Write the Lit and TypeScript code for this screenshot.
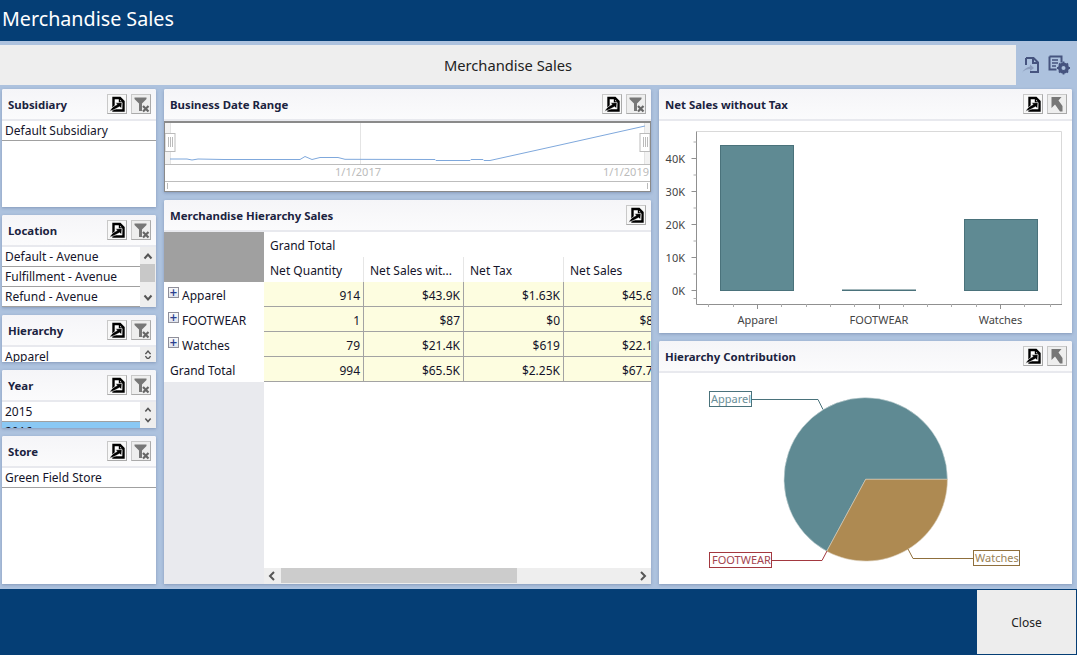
import { LitElement, html, css, svg } from "lit";
import { customElement } from "lit/decorators.js";

const exportIcon = svg`<path d="M6.500 4h6.500l3.500 3.500V16.500H6.500z" fill="#fff" stroke="#000" stroke-width="2.400"/><path d="M12.500 3.500v4.500h4.500" fill="none" stroke="#000" stroke-width="1.400"/><path d="M2.500 17.500C4.500 13.500 7.500 11.500 10 10.500L8.500 8.800 15 8.500 14.500 14.500 12.500 12.800C9.500 14.500 6.500 16 2.500 17.500z" fill="#000" stroke="#fff" stroke-width=".6"/>`;
const filterIcon = svg`<path d="M3.500 3.500h12v1.500l-4.500 4.500V17h-3V9.500L3.500 5z" fill="#777"/><path d="M12 12l5.500 5.500m0-5.500L12 17.500" stroke="#666" stroke-width="2.200" fill="none"/>`;
const upIcon = svg`<path d="M4.500 3h10l-3 3.500L15.500 12v5.500H13L8 10.500 4.500 14z" fill="#777"/>`;

const btn = (i: unknown, cls = "") => html`<span class="btn ${cls}"><svg width="20" height="20" viewBox="0 0 20 20">${i}</svg></span>`;

const chevUp = svg`<path d="M3.500 8.500L7 4.500l3.500 4" fill="none" stroke="#555" stroke-width="2"/>`;
const chevDown = svg`<path d="M3.500 4.500L7 8.500l3.500-4" fill="none" stroke="#555" stroke-width="2"/>`;

@customElement("app-root")
export class AppRoot extends LitElement {
  static styles = css`
    :host { display: block; width: 1077px; height: 658px; background: #fff; font-family: "Noto Sans", "DejaVu Sans", sans-serif; font-size: 12px; color: #14142a; overflow: hidden; }
    .page { display: flex; flex-direction: column; height: 655px; }
    .top { height: 41px; background: #053e75; color: #fff; font-size: 19.700px; line-height: 37px; padding-left: 2px; flex: none; }
    .main { flex: 1; min-height: 0; background: #adc2de; padding-top: 4px; display: flex; flex-direction: column; }
    .titlebar { height: 40px; display: flex; flex: none; }
    .tb-text { width: 1016px; background: #eee; text-align: center; line-height: 40px; font-size: 14.700px; color: #222; }
    .tb-tools { flex: 1; display: flex; align-items: center; gap: 8px; padding: 0 0 0 6px; }
    .cols { flex: 1; min-height: 0; display: grid; grid-template-columns: 154px 487px 413px; gap: 8px; padding: 4px 5px 5px 2px; }
    .col { display: flex; flex-direction: column; gap: 8px; min-height: 0; }
    .panel { background: #fff; display: flex; flex-direction: column; overflow: hidden; border-radius: 2px 2px 0 0; box-shadow: 0 1px 3px rgba(60,80,120,.35); min-height: 0; }
    .grow { flex: 1; }
    .head { height: 30px; flex: none; display: flex; align-items: center; gap: 4px; padding: 0 5px 0 6px; background: linear-gradient(#f5f5f8, #fbfbfc); border-bottom: 2px solid #e8e9ee; }
    .head b { flex: 1; font-size: 11.400px; font-weight: 700; color: #1b2340; white-space: nowrap; }
    .btn { width: 18px; height: 18px; border: 1px solid #c9c9c9; border-bottom-color: #aaa; border-right-color: #aaa; background: #f8f8f8; display: block; overflow: hidden; }
    .btn svg { display: block; margin: -1px; }
    .btn.off { background: #eeeeee; }
    .list { flex: 1; min-height: 0; display: flex; overflow: hidden; }
    .rows { flex: 1; min-width: 0; }
    .row { height: 19px; line-height: 20px; padding-left: 3px; border-bottom: 1px solid #a0a0a0; white-space: nowrap; }
    .row.sel { background: #8ac8f4; }
    .vs { width: 16px; flex: none; background: #eee; display: flex; flex-direction: column; align-items: center; justify-content: space-between; padding: 3px 0; box-sizing: border-box; position: relative; }
    .vs svg { display: block; }
    .vs i { position: absolute; left: 0; top: 17px; width: 15px; height: 18px; background: #c8c8c8; }
    .range { height: 71px; flex: none; box-sizing: border-box; border: 1px solid #8a8a8a; border-top-width: 2px; }
    .range svg, .chart svg { display: block; }
    .pivot { flex: 1; min-height: 0; display: flex; }
    .pv-left { width: 100px; flex: none; background: #e9eaee; }
    .corner { height: 50px; background: #a0a0a0; }
    .pv-row { height: 25px; line-height: 28px; background: #fff; display: flex; white-space: nowrap; padding-left: 4px; overflow: hidden; }
    .pv-row.total { padding-left: 6px; }
    .plus { width: 9px; height: 9px; margin: 5px 3px 0 0; border: 1px solid #8f8f9a; background: linear-gradient(#fafafa,#dfe3ee); color: #2b3f8f; font: 700 10px/9px "DejaVu Sans", sans-serif; text-align: center; flex: none; }
    .pv-right { flex: 1; min-width: 0; display: flex; flex-direction: column; }
    .grid { flex: 1; min-height: 0; overflow: hidden; display: grid; grid-template-columns: repeat(4, 100px); grid-auto-rows: 25px; align-content: start; }
    .gt { grid-column: 1 / -1; line-height: 27px; padding-left: 6px; }
    .ch { line-height: 27px; padding-left: 6px; white-space: nowrap; box-sizing: border-box; border-right: 1px solid #e6e6e6; }
    .c { background: #fdfde0; text-align: right; line-height: 27px; padding-right: 3px; box-sizing: border-box; border-right: 1px solid #a3a3a3; border-bottom: 1px solid #a3a3a3; white-space: nowrap; }
    .hs { height: 16px; flex: none; background: #eee; display: flex; align-items: center; justify-content: space-between; position: relative; padding: 0 4px; box-sizing: border-box; }
    .hs i { position: absolute; left: 17px; top: 0; width: 236px; height: 15px; background: #ccc; }
    .hs svg { display: block; }
    .chart { flex: 1; min-height: 0; }
    .chart text { font-family: "Noto Sans", "DejaVu Sans", sans-serif; font-size: 11px; }
    .foot { height: 66px; flex: none; background: #053e75; padding: 1px; box-sizing: border-box; display: flex; justify-content: flex-end; }
    .close { width: 99px; background: #ededed; color: #222; display: flex; align-items: center; justify-content: center; }
    .rt { font-family: "Noto Sans", "DejaVu Sans", sans-serif; font-size: 11px; fill: #bbb; }
  `;

  private head(title: string, icons: unknown[]) {
    return html`<div class="head"><b>${title}</b>${icons}</div>`;
  }
  private vs(thumb = false) {
    return html`<div class="vs">
      <svg width="14" height="13" viewBox="0 0 14 13">${chevUp}</svg>
      ${thumb ? html`<i></i>` : ""}
      <svg width="14" height="13" viewBox="0 0 14 13">${chevDown}</svg>
    </div>`;
  }

  private slicerBtns() { return [btn(exportIcon), btn(filterIcon, "off")]; }

  private rangeChart() {
    const H = (x: number) => svg`<rect x="${x}" y="11.500" width="10" height="18" fill="#fff" stroke="#bbb"/><path d="M${x + 3.5} 15v10M${x + 5.5} 15v10M${x + 7.5} 15v10" stroke="#bbb"/>`;
    return svg`<svg width="485" height="69" viewBox="165 123 485 69">
      <rect x="165" y="123" width="5" height="41" fill="#f2f2f2"/>
      <rect x="645" y="123" width="5" height="41" fill="#f2f2f2"/>
      <path d="M360.500 123v41M170.500 123v41M644.500 123v41" stroke="#e4e4e4"/>
      <path d="M165 164.500h485M165 181.500h485" stroke="#bdbdbd"/>
      <polyline fill="none" stroke="#7fa8dc" points="170,159 187,159 192,160 198,159 224,159.500 300,159.500 305,156.500 312,159.500 320,157.500 338,157.500 345,159.300 435,159.500 436,160.500 470,160.500 471,159.500 483,159.500 484,160.500 490,160.500 560,145 645,126"/>
      <text class="rt" x="381" y="176" text-anchor="end">1/1/2017</text>
      <text class="rt" x="649" y="176" text-anchor="end">1/1/2019</text>
      <g transform="translate(165 122)">${H(0)}</g>
      <g transform="translate(640 122)">${H(0)}</g>
      <path d="M167.500 183v6M647.500 183v6" stroke="#bbb"/>
    </svg>`;
  }

  private barChart() {
    const ys = [290.5, 257.5, 224.5, 191.5, 158.5];
    const minorY = [274, 241, 208, 175, 142, 298.5];
    const minorX = [708, 733, 781, 806, 830, 854, 903, 927, 951, 976, 1024, 1050];
    const bars = [[720.5, 145.5, 73, 145], [842.5, 290, 73, 0.5], [964.5, 219.5, 73, 71]];
    const xl: [string, number][] = [["Apparel", 757.5], ["FOOTWEAR", 879], ["Watches", 1000.5]];
    return svg`<svg width="413" height="212" viewBox="659 121 413 212">
      <path d="M696.500 131.500H1061.500V304" fill="none" stroke="#d9d9d9"/>
      <path d="M696.500 131.500V304.500H1062" fill="none" stroke="#909090"/>
      ${ys.map((y, i) => svg`<path d="M691.500 ${y}h5" stroke="#909090"/><text x="685" y="${y + 4}" text-anchor="end" fill="#444">${i * 10}K</text>`)}
      ${minorY.map((y) => svg`<path d="M693.500 ${y}h3" stroke="#aaa"/>`)}
      ${minorX.map((x) => svg`<path d="M${x}.5 304v3" stroke="#aaa"/>`)}
      ${xl.map(([t, x]) => svg`<path d="M${Math.floor(x)}.5 304v5" stroke="#909090"/><text x="${x}" y="324" text-anchor="middle" fill="#444">${t}</text>`)}
      ${bars.map(([x, y, w, h]) => svg`<rect x="${x}" y="${y}" width="${w}" height="${h}" fill="#5f8a93" stroke="#4a727b"/>`)}
    </svg>`;
  }

  private pieChart() {
    return svg`<svg width="413" height="211" viewBox="659 373 413 211">
      <path d="M865.700 479.300H947.400A81.700 81.700 0 1 0 826.800 551.200Z" fill="#5f8a93" stroke="#c9d6d8" stroke-width=".6"/>
      <path d="M865.700 479.300H947.400A81.700 81.700 0 0 1 826.800 551.200Z" fill="#ae8a52" stroke="#d8cbb6" stroke-width=".6"/>
      <path d="M752 399.500H818L823 409.500" fill="none" stroke="#4a727b"/>
      <rect x="709.500" y="391.500" width="42" height="15" fill="#fff" stroke="#4a727b"/>
      <text x="711" y="403" fill="#6b8f98">Apparel</text>
      <path d="M772 560.500H822L827 551" fill="none" stroke="#a3383f"/>
      <rect x="709.500" y="552.500" width="62" height="15" fill="#fff" stroke="#a3383f"/>
      <text x="712" y="564" fill="#a3444f">FOOTWEAR</text>
      <path d="M973 558.500H913L908 549" fill="none" stroke="#8f6f3c"/>
      <rect x="973.500" y="550.500" width="46" height="15" fill="#fff" stroke="#8f6f3c"/>
      <text x="975" y="562" fill="#9a8256">Watches</text>
    </svg>`;
  }

  render() {
    const cells = [
      ["914", "$43.9K", "$1.63K", "$45.6K"],
      ["1", "$87", "$0", "$87"],
      ["79", "$21.4K", "$619", "$22.1K"],
      ["994", "$65.5K", "$2.25K", "$67.7K"],
    ];
    return html`<div class="page">
      <div class="top">Merchandise Sales</div>
      <div class="main">
        <div class="titlebar">
          <div class="tb-text">Merchandise Sales</div>
          <div class="tb-tools">
            <svg width="18" height="20" viewBox="0 0 18 20"><path d="M4 3h7.500L16 7.500V17H8M4 3v7M11 3v5h5" fill="none" stroke="#46547f" stroke-width="2"/><path d="M0 17.500c2-3.500 5-5.500 8-6V9.500l4 3.500-4 3v-2c-3 0-5 1-8 3z" fill="#8b9cbc"/></svg>
            <svg width="24" height="22" viewBox="0 0 24 22"><path d="M1.500 2.500h12v6M1.500 2.500v13h7" fill="none" stroke="#46547f" stroke-width="2"/><path d="M4 6h6M4 9h6M4 12h4" stroke="#46547f" stroke-width="1.300"/><circle cx="15.500" cy="14" r="4" fill="none" stroke="#46547f" stroke-width="3"/><path d="M15.500 7.500v13M9 14h13M11 9.500l9 9M20 9.500l-9 9" stroke="#46547f" stroke-width="1.800"/><circle cx="15.500" cy="14" r="2" fill="#adc2de"/></svg>
          </div>
        </div>
        <div class="cols">
          <div class="col">
            <div class="panel" style="height:118px">
              ${this.head("Subsidiary", this.slicerBtns())}
              <div class="list"><div class="rows"><div class="row">Default Subsidiary</div></div></div>
            </div>
            <div class="panel" style="height:92px">
              ${this.head("Location", this.slicerBtns())}
              <div class="list"><div class="rows">
                <div class="row">Default - Avenue</div><div class="row">Fulfillment - Avenue</div><div class="row">Refund - Avenue</div>
              </div>${this.vs(true)}</div>
            </div>
            <div class="panel" style="height:47px">
              ${this.head("Hierarchy", this.slicerBtns())}
              <div class="list"><div class="rows"><div class="row">Apparel</div></div>
                <div class="vs"><svg width="14" height="6" viewBox="0 3 14 6">${chevUp}</svg><svg width="14" height="6" viewBox="0 3 14 6">${chevDown}</svg></div>
              </div>
            </div>
            <div class="panel" style="height:58px">
              ${this.head("Year", this.slicerBtns())}
              <div class="list"><div class="rows"><div class="row">2015</div><div class="row sel">2016</div></div>
                ${this.vs()}</div>
            </div>
            <div class="panel grow">
              ${this.head("Store", this.slicerBtns())}
              <div class="list"><div class="rows"><div class="row">Green Field Store</div></div></div>
            </div>
          </div>
          <div class="col">
            <div class="panel" style="height:103px">
              ${this.head("Business Date Range", this.slicerBtns())}
              <div class="range">${this.rangeChart()}</div>
            </div>
            <div class="panel grow">
              ${this.head("Merchandise Hierarchy Sales", [btn(exportIcon)])}
              <div class="pivot">
                <div class="pv-left">
                  <div class="corner"></div>
                  ${["Apparel", "FOOTWEAR", "Watches"].map((t) => html`<div class="pv-row"><span class="plus">+</span>${t}</div>`)}
                  <div class="pv-row total">Grand Total</div>
                </div>
                <div class="pv-right">
                  <div class="grid">
                    <div class="gt">Grand Total</div>
                    ${["Net Quantity", "Net Sales wit...", "Net Tax", "Net Sales"].map((t) => html`<div class="ch">${t}</div>`)}
                    ${cells.flat().map((v) => html`<div class="c">${v}</div>`)}
                  </div>
                  <div class="hs"><i></i>
                    <svg width="8" height="10" viewBox="0 0 8 10"><path d="M6 1L2 5l4 4" fill="none" stroke="#555" stroke-width="2"/></svg>
                    <svg width="8" height="10" viewBox="0 0 8 10"><path d="M2 1l4 4-4 4" fill="none" stroke="#555" stroke-width="2"/></svg>
                  </div>
                </div>
              </div>
            </div>
          </div>
          <div class="col">
            <div class="panel" style="height:244px">
              ${this.head("Net Sales without Tax", [btn(exportIcon), btn(upIcon, "off")])}
              <div class="chart">${this.barChart()}</div>
            </div>
            <div class="panel grow">
              ${this.head("Hierarchy Contribution", [btn(exportIcon), btn(upIcon, "off")])}
              <div class="chart">${this.pieChart()}</div>
            </div>
          </div>
        </div>
      </div>
      <div class="foot"><div class="close">Close</div></div>
    </div>`;
  }
}
